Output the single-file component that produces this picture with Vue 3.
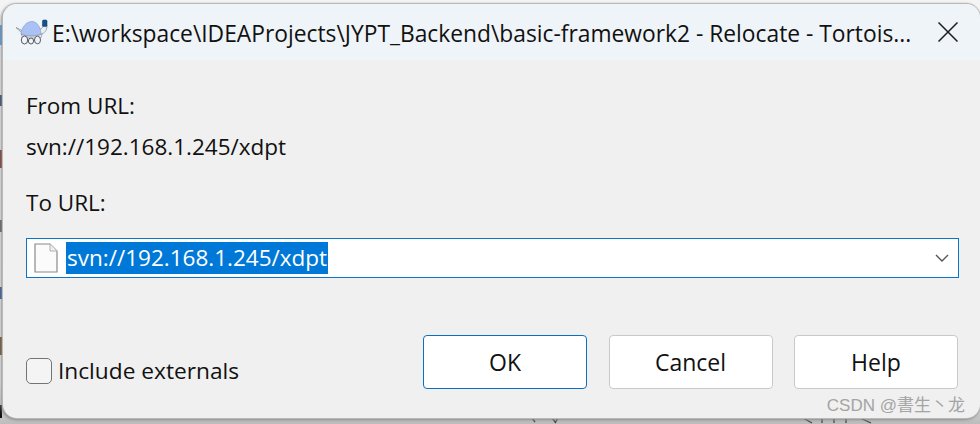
<script setup>
const title = 'E:\\workspace\\IDEAProjects\\JYPT_Backend\\basic-framework2 - Relocate - Tortois...'
const url = 'svn://192.168.1.245/xdpt'
const buttons = ['OK', 'Cancel', 'Help']
const slivers = [
  { top: 25, height: 20, color: '#4a9de8' },
  { top: 95, height: 11, color: '#26406e' },
  { top: 150, height: 18, color: '#7a2a20' },
  { top: 220, height: 12, color: '#555b66' },
  { top: 287, height: 12, color: '#1f4fa0' },
  { top: 337, height: 18, color: '#6b4a20' },
  { top: 405, height: 13, color: '#111111' },
]
</script>

<template>
  <div class="page">
    <span
      v-for="s in slivers"
      :key="s.top"
      class="sliver"
      :style="{ top: s.top + 'px', height: s.height + 'px', background: s.color }"
    ></span>
    <svg class="marks" width="980" height="6" viewBox="0 0 980 6">
      <path d="M532 0 L535 4 M552 0 L556 5 M558 0 L555 5 M803 0 L812 5 M822 0 V5 M834 0 V5 M846 0 V5 M860 0 L871 5" stroke="#444" stroke-width="1.300" fill="none" />
    </svg>
    <div class="dialog">
      <header class="titlebar">
        <svg class="turtle" width="32" height="30" viewBox="0 0 32 30">
          <path d="M0 10.500 L7 14 L7 17 Z" fill="#e4e7ee" stroke="#7d8490" stroke-width=".7" />
          <path d="M24 12 C26 12 27 10 27 7 L31 8 C31 12 30 15 26 17 L23 17 Z" fill="#eceef2" stroke="#7d8490" stroke-width=".7" />
          <rect x="26.500" y="3" width="4.500" height="6.500" rx="1.200" fill="#14548c" stroke="#0d2f55" stroke-width=".5" />
          <path d="M5 17 C6 9 11 4.500 16 4.500 C21 4.500 24.500 10 25 17 C20 19.500 10 19.500 5 17 Z" fill="#a9c1f4" stroke="#8aa0cf" stroke-width=".7" />
          <path d="M5 17 C10 20 20 20 26 17 L25 21 L7 21 Z" fill="#eef0f4" stroke="#7d8490" stroke-width=".6" />
          <ellipse cx="8.500" cy="23" rx="3.200" ry="4" fill="#f2f3f6" stroke="#555c66" stroke-width="1" />
          <ellipse cx="15" cy="24" rx="2.600" ry="3" fill="#f2f3f6" stroke="#555c66" stroke-width="1" />
          <ellipse cx="21.500" cy="23" rx="3" ry="3.800" fill="#f2f3f6" stroke="#555c66" stroke-width="1" />
        </svg>
        <span class="title">{{ title }}</span>
        <svg class="close" width="20" height="20" viewBox="0 0 20 20">
          <path d="M.5 .5 L19.500 19.500 M19.500 .5 L.5 19.500" stroke="#1c1c1c" stroke-width="1.500" fill="none" />
        </svg>
      </header>

      <main class="body">
        <div class="label from">From URL:</div>
        <div class="value">{{ url }}</div>
        <div class="label to">To URL:</div>
        <div class="combo">
          <svg class="file" width="24" height="30" viewBox="0 0 24 30">
            <path d="M1 1 H16 L23 8 V29 H1 Z" fill="#fbfbfb" stroke="#8a8a8a" stroke-width="1.200" />
            <path d="M16 1 V8 H23" fill="#f0f0f0" stroke="#b0b0b0" stroke-width="1" />
          </svg>
          <span class="selected">{{ url }}</span>
          <svg class="chevron" width="14" height="8" viewBox="0 0 14 8">
            <path d="M1 1 L7 7 L13 1" fill="none" stroke="#555" stroke-width="1.400" />
          </svg>
        </div>
        <footer class="footer">
          <label class="check">
            <span class="box"></span>
            <span>Include externals</span>
          </label>
          <div class="buttons">
            <button v-for="(b, i) in buttons" :key="b" class="btn" :class="{ primary: i === 0 }">{{ b }}</button>
          </div>
        </footer>
        <div class="watermark">CSDN @書生丶龙</div>
      </main>
    </div>
  </div>
</template>

<style>
html, body { margin: 0; background: #c0c0c0; }
</style>

<style scoped>
.page {
  position: relative;
  width: 980px;
  height: 424px;
  overflow: hidden;
  box-sizing: border-box;
  padding: 4px 0 0 3px;
  background: linear-gradient(#f4f4f4, #eeeeee 90%, #c4c4c4 98.600%, #bcbcbc);
  font-family: "Open Sans", "Noto Sans", sans-serif;
  color: #111;
}
.sliver {
  position: absolute;
  left: 0;
  width: 2px;
}
.marks {
  position: absolute;
  left: 0;
  top: 418px;
}
.dialog {
  position: relative;
  width: 977px;
  height: 414px;
  border-radius: 14px;
  overflow: hidden;
  background: #f0f0f0;
  display: flex;
  flex-direction: column;
  box-shadow: 0 0 0 1px #b8b8b8, -1px 1px 3px 1px #8c8c8c;
}
.titlebar {
  height: 56px;
  flex: none;
  background: #eff4f8;
  display: flex;
  align-items: center;
  padding: 0 22px 0 13px;
}
.turtle { flex: none; }
.title {
  flex: 1;
  margin-left: 4px;
  padding-top: 2px;
  font-size: 22.800px;
  white-space: nowrap;
}
.close { flex: none; }
.body {
  flex: 1;
  position: relative;
  padding: 0 21px 0 23px;
  font-size: 22.500px;
}
.label, .value { line-height: 30px; }
.from { margin-top: 31px; }
.value { margin-top: 11px; }
.to { margin-top: 26px; }
.combo {
  margin-top: 20px;
  height: 40px;
  box-sizing: border-box;
  border: 1px solid #0a74c8;
  background: #fff;
  display: flex;
  align-items: center;
  padding: 0 9px 0 7px;
}
.selected {
  margin-left: 8px;
  background: #0078d7;
  color: #fff;
  line-height: 32px;
  height: 32px;
  padding: 0 1px;
}
.chevron { margin-left: auto; }
.footer {
  display: flex;
  align-items: flex-start;
  justify-content: space-between;
  margin-top: 57px;
  padding-right: 1px;
}
.check {
  display: flex;
  align-items: center;
  gap: 6px;
  margin-top: 20px;
  font-size: 22.700px;
}
.box {
  width: 26px;
  height: 26px;
  box-sizing: border-box;
  border: 1.500px solid #747474;
  border-radius: 5px;
  background: #f4f4f4;
}
.buttons { display: flex; gap: 21.500px; }
.btn {
  width: 164px;
  height: 54px;
  box-sizing: border-box;
  border: 1px solid #c9c9c9;
  border-radius: 4px;
  background: #fff;
  font: inherit;
  font-size: 23px;
  color: #111;
  padding: 0;
}
.primary { border-color: #0a6fc2; }
.watermark {
  position: absolute;
  right: 15px;
  bottom: 2px;
  font-size: 17px;
  color: #a4a4a4;
  font-family: "Liberation Sans", "Noto Sans CJK TC", sans-serif;
}
</style>
